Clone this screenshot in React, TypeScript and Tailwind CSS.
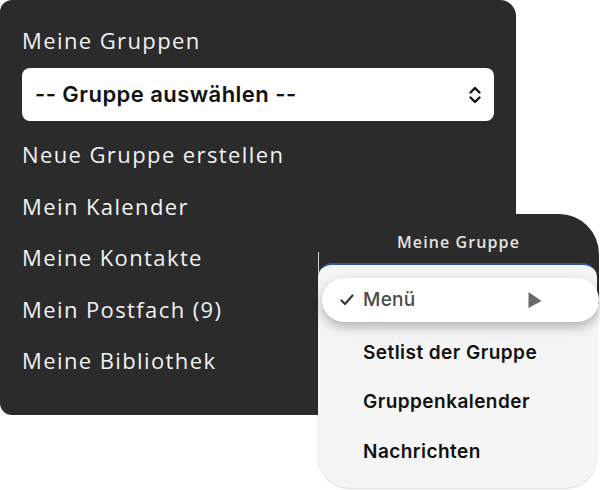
import React from "react";

const poppins = { fontFamily: '"Open Sans", "Lato", sans-serif' };
const sf = { fontFamily: 'Inter, "Liberation Sans", sans-serif' };

export default function App() {
  const items = [
    "Neue Gruppe erstellen",
    "Mein Kalender",
    "Meine Kontakte",
    "Mein Postfach (9)",
    "Meine Bibliothek",
  ];
  return (
    <div className="relative w-[600px] h-[490px] bg-white overflow-hidden">
      <div
        className="w-[516px] h-[415px] bg-[#2b2b2b] rounded-[12px] rounded-tr-[16px] flex flex-col px-[22px] pt-[26px]"
        style={poppins}
      >
        <div className="text-[22px] leading-[28px] text-[#f2f2f2] tracking-[1.4px]">Meine Gruppen</div>
        <div className="mt-[14px] h-[53px] bg-white rounded-[8px] flex items-center justify-between pl-[13px] pr-[12px]">
          <span className="text-[22px] font-semibold text-[#111] tracking-[0.45px]" style={sf}>
            -- Gruppe auswählen --
          </span>
          <svg width="14" height="20" viewBox="0 0 14 20" fill="none" stroke="#111" strokeWidth="2.4" strokeLinecap="round" strokeLinejoin="round">
            <path d="M2.5 7.5 7 3l4.5 4.5" />
            <path d="M2.5 12.5 7 17l4.5-4.5" />
          </svg>
        </div>
        <div className="mt-[8px] flex flex-col">
          {items.map((t) => (
            <div key={t} className="h-[51.5px] flex items-center text-[22px] text-[#f2f2f2] tracking-[1.4px]">
              {t}
            </div>
          ))}
        </div>
      </div>

      <div className="absolute left-[318px] top-[214px] w-[281px] h-[274px]" style={sf}>
        <div className="absolute left-0 top-0 right-0 h-[90px] bg-[#2b2b2b] rounded-tr-[40px]" />
        <div className="absolute left-0 top-0 right-0 h-[49px] flex justify-center pt-[17px]">
          <span className="text-[16px] leading-[22px] font-semibold text-[#e4e4e4] tracking-[1.1px]" style={{ fontFamily: '"Open Sans", sans-serif' }}>
            Meine Gruppe
          </span>
        </div>
        <div className="absolute left-0 top-[38px] w-px h-[201px] bg-[#d4d4d4]" />
        <div className="absolute left-0 top-[49px] right-[2px] bottom-0 bg-[#f5f5f5] rounded-t-[14px] rounded-b-[32px] border-t-[2px] border-[#2d5a98] shadow-[0_1px_2px_rgba(0,0,0,0.15)]">
          <div className="absolute left-[45px] top-[63px] flex flex-col">
            {["Setlist der Gruppe", "Gruppenkalender", "Nachrichten"].map((t) => (
              <div key={t} className="h-[49.5px] flex items-center text-[19px] font-semibold text-[#111] tracking-[0.45px]">
                {t}
              </div>
            ))}
          </div>
        </div>
        <div className="absolute left-[4px] right-0 top-[64px] h-[44px] bg-white rounded-[22px] shadow-[0_5px_12px_rgba(0,0,0,0.28)] flex items-center">
          <svg className="ml-[18px]" width="14" height="12" viewBox="0 0 14 12" fill="none" stroke="#3a3a3a" strokeWidth="2.2" strokeLinecap="round" strokeLinejoin="round">
            <path d="M1.5 6.5 5 10 12.5 1.5" />
          </svg>
          <span className="ml-[9px] text-[19px] font-medium text-[#4a4a4a] tracking-[0.3px]">Menü</span>
          <svg className="ml-auto mr-[56px]" width="16" height="18" viewBox="0 0 16 18">
            <path d="M1.5 1 14.5 10 1.5 17Z" fill="#6a6a6a" />
          </svg>
        </div>
      </div>
    </div>
  );
}
